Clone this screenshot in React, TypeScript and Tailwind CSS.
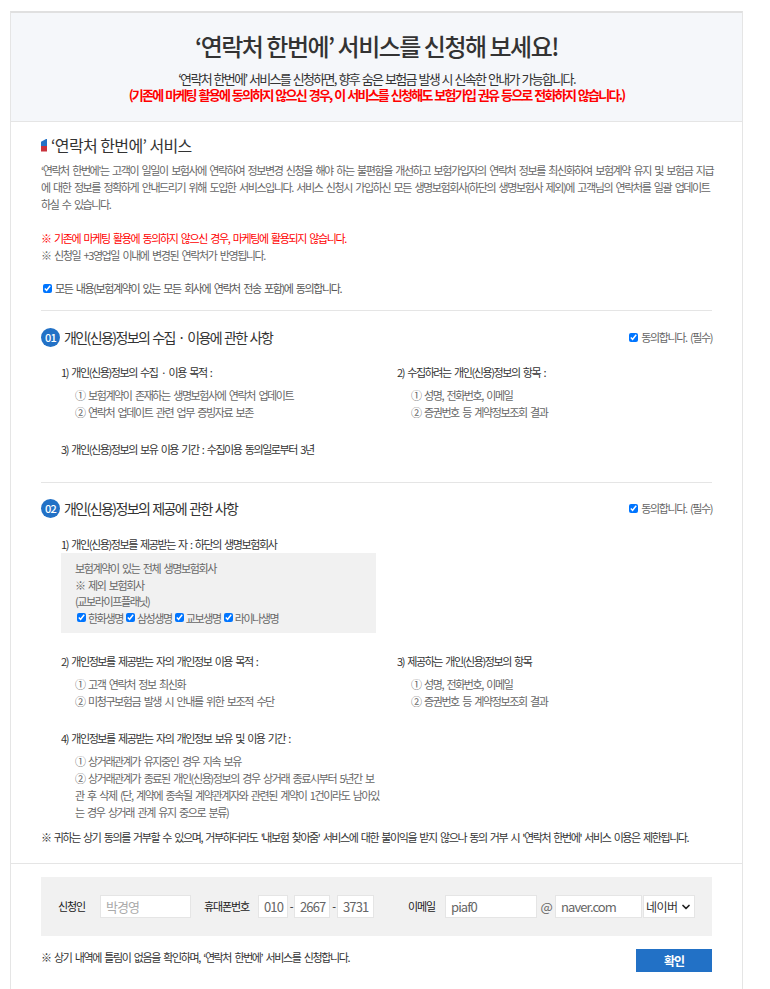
import React from 'react';
import { ChevronDown } from 'lucide-react';

const bodyText = 'text-[11px] tracking-[-1.4px] [word-spacing:2.3px]';

const Check = () => (
  <input type="checkbox" defaultChecked className="w-[9px] h-[9px] m-0 shrink-0 accent-[#0075ff]" />
);

const Head = ({ children, className = '' }: { children: React.ReactNode; className?: string }) => (
  <p className={`h-[17px] whitespace-nowrap leading-[17px] text-[11px] tracking-[-1.4px] [word-spacing:2.1px] text-[#333] ${className}`}>{children}</p>
);

const Item = ({ children }: { children: React.ReactNode }) => (
  <p className="pl-[14px] whitespace-nowrap leading-[17px] text-[11px] tracking-[-1.4px] [word-spacing:2.3px] text-[#666]">{children}</p>
);

const SectionTitle = ({ num, title }: { num: string; title: string }) => (
  <div className="flex items-center justify-between h-[20px]">
    <div className="flex items-center">
      <span className="w-[19px] h-[19px] rounded-full bg-[#2271c6] text-white text-[11px] font-medium tracking-[-0.8px] flex items-center justify-center">{num}</span>
      <h3 className="ml-[4px] text-[14px] tracking-[-1.6px] [word-spacing:1.5px] text-[#333]">{title}</h3>
    </div>
    <label className={`flex items-center gap-[3px] ${bodyText} text-[#666]`}>
      <Check />
      동의합니다. (필수)
    </label>
  </div>
);

const Company = ({ name }: { name: string }) => (
  <span className="flex items-center gap-[2px]">
    <Check />
    {name}
  </span>
);

const inputCls = 'h-[23px] border border-[#e5e5e5] bg-white pl-[5px] pr-0 text-[13px] tracking-[-0.9px] text-[#666] outline-none';

export default function App() {
  return (
    <div className="min-h-screen bg-white pl-[10px] pt-[11px] font-['Noto_Sans_CJK_KR','Noto_Sans',sans-serif]">
      <div className="w-[733px] border-x border-[#e5e5e5] border-t-2 border-t-[#e0e0e0]">
        {/* Top banner */}
        <header className="h-[109px] bg-[#f5f7fa] border-b border-[#e5e5e5] pt-[16px] text-center">
          <h1 className="text-[24px] leading-[34px] font-medium tracking-[-1.5px] text-[#333]">‘연락처 한번에’ 서비스를 신청해 보세요!</h1>
          <p className="mt-[8px] text-[13px] leading-[16px] tracking-[-1.7px] [word-spacing:1.5px] text-[#333]">‘연락처 한번에’ 서비스를 신청하면, 향후 숨은 보험금 발생 시 신속한 안내가 가능합니다.</p>
          <p className="text-[13px] leading-[16px] font-bold tracking-[-1.75px] [word-spacing:1.5px] text-[#ff0000]">(기존에 마케팅 활용에 동의하지 않으신 경우, 이 서비스를 신청해도 보험가입 권유 등으로 전화하지 않습니다.)</p>
        </header>

        <div className="px-[30px]">
          {/* Intro */}
          <div className="pt-[13px] pb-[13px] border-b border-[#e5e5e5]">
            <h2 className="flex items-center h-[20px] text-[16px] tracking-[-0.6px] text-[#333]">
              <span className="w-[6px] h-[13px] mr-[4px] bg-[linear-gradient(180deg,#2271c6_55%,#c8323c_55%)] [clip-path:polygon(0_25%,100%_0,100%_100%,0_100%)]" />
              ‘연락처 한번에’ 서비스
            </h2>
            <p className={`mt-[7px] whitespace-nowrap ${bodyText} leading-[17px] text-[#666]`}>
              ‘연락처 한번에’는 고객이 일일이 보험사에 연락하여 정보변경 신청을 해야 하는 불편함을 개선하고 보험가입자의 연락처 정보를 최신화하여 보험계약 유지 및 보험금 지급<br />
              에 대한 정보를 정확하게 안내드리기 위해 도입한 서비스입니다. 서비스 신청시 가입하신 모든 생명보험회사(하단의 생명보험사 제외)에 고객님의 연락처를 일괄 업데이트<br />
              하실 수 있습니다.
            </p>
            <p className={`mt-[17px] ${bodyText} leading-[17px] text-[#ff0000]`}>※ 기존에 마케팅 활용에 동의하지 않으신 경우, 마케팅에 활용되지 않습니다.</p>
            <p className={`${bodyText} leading-[17px] text-[#666]`}>※ 신청일 +3영업일 이내에 변경된 연락처가 반영됩니다.</p>
            <label className={`mt-[16px] pl-[2px] flex items-center gap-[3px] h-[17px] ${bodyText} text-[#555]`}>
              <Check />
              모든 내용(보험계약이 있는 모든 회사에 연락처 전송 포함)에 동의합니다.
            </label>
          </div>

          {/* Section 01 */}
          <section className="pt-[16px] pb-[24px] border-b border-[#e5e5e5]">
            <SectionTitle num="01" title="개인(신용)정보의 수집 · 이용에 관한 사항" />
            <div className="mt-[17px] pl-[20px] grid grid-cols-[336px_1fr]">
              <div>
                <Head className="mb-[6px]">1) 개인(신용)정보의 수집 · 이용 목적 :</Head>
                <Item>① 보험계약이 존재하는 생명보험사에 연락처 업데이트</Item>
                <Item>② 연락처 업데이트 관련 업무 증빙자료 보존</Item>
              </div>
              <div>
                <Head className="mb-[6px]">2) 수집하려는 개인(신용)정보의 항목 :</Head>
                <Item>① 성명, 전화번호, 이메일</Item>
                <Item>② 증권번호 등 계약정보조회 결과</Item>
              </div>
            </div>
            <Head className="mt-[20px] ml-[20px]">3) 개인(신용)정보의 보유 이용 기간 : 수집이용 동의일로부터 3년</Head>
          </section>

          {/* Section 02 */}
          <section className="pt-[15px] pb-[17px]">
            <SectionTitle num="02" title="개인(신용)정보의 제공에 관한 사항" />
            <div className="pl-[20px]">
              <Head className="mt-[18px]">1) 개인(신용)정보를 제공받는 자 : 하단의 생명보험회사</Head>
              <div className={`w-[315px] h-[80px] bg-[#f1f1f1] pt-[7px] pl-[14px] ${bodyText} leading-[16.5px] text-[#666]`}>
                <p>보험계약이 있는 전체 생명보험회사</p>
                <p>※ 제외 보험회사</p>
                <p>(교보라이프플래닛)</p>
                <div className="flex items-center gap-[3px] pl-[2px]">
                  <Company name="한화생명" />
                  <Company name="삼성생명" />
                  <Company name="교보생명" />
                  <Company name="라이나생명" />
                </div>
              </div>
              <div className="mt-[20px] grid grid-cols-[336px_1fr]">
                <div>
                  <Head className="mb-[6px]">2) 개인정보를 제공받는 자의 개인정보 이용 목적 :</Head>
                  <Item>① 고객 연락처 정보 최신화</Item>
                  <Item>② 미청구보험금 발생 시 안내를 위한 보조적 수단</Item>
                </div>
                <div>
                  <Head className="mb-[6px]">3) 제공하는 개인(신용)정보의 항목</Head>
                  <Item>① 성명, 전화번호, 이메일</Item>
                  <Item>② 증권번호 등 계약정보조회 결과</Item>
                </div>
              </div>
              <Head className="mt-[20px] mb-[6px]">4) 개인정보를 제공받는 자의 개인정보 보유 및 이용 기간 :</Head>
              <Item>① 상거래관계가 유지중인 경우 지속 보유</Item>
              <Item>
                ② 상거래관계가 종료된 개인(신용)정보의 경우 상거래 종료시부터 5년간 보<br />
                관 후 삭제 (단, 계약에 종속될 계약관계자와 관련된 계약이 1건이라도 남아있<br />
                는 경우 상거래 관계 유지 중으로 분류)
              </Item>
            </div>
            <Head className="mt-[8px]">※ 귀하는 상기 동의를 거부할 수 있으며, 거부하더라도 '내보험 찾아줌' 서비스에 대한 불이익을 받지 않으나 동의 거부 시 '연락처 한번에' 서비스 이용은 제한됩니다.</Head>
          </section>
        </div>

        {/* Apply form */}
        <div className="border-t border-[#e5e5e5] px-[30px] pt-[13px] pb-[17px]">
          <div className="h-[59px] bg-[#f1f1f1] flex items-center pl-[17px] text-[11px] tracking-[-1.1px] text-[#222]">
            <span className="w-[42px]">신청인</span>
            <input readOnly value="박경영" className={`${inputCls} w-[91px] bg-[#f3f3f3] border-[#e0e0e0] text-[#aaa] text-[12px] tracking-[-0.6px]`} />
            <span className="ml-[13px] w-[54px]">휴대폰번호</span>
            <input readOnly value="010" className={`${inputCls} w-[30px]`} />
            <span className="w-[6px] text-center">-</span>
            <input readOnly value="2667" className={`${inputCls} w-[36px]`} />
            <span className="w-[7px] text-center">-</span>
            <input readOnly value="3731" className={`${inputCls} w-[37px]`} />
            <span className="ml-[34px] w-[37px]">이메일</span>
            <input readOnly value="piaf0" className={`${inputCls} w-[92px] bg-[#e8f0fe] text-[#222] tracking-[-0.3px]`} />
            <span className="w-[18px] text-center text-[13px] text-[#666]">@</span>
            <input readOnly value="naver.com" className={`${inputCls} w-[87px] tracking-[-0.7px]`} />
            <div className="relative ml-[1px]">
              <select className="block h-[23px] w-[52px] appearance-none bg-white border border-[#e5e5e5] pl-[2px] text-[12px] tracking-[-0.6px] text-[#333] outline-none">
                <option>네이버</option>
              </select>
              <ChevronDown size={12} strokeWidth={3.5} className="absolute right-[3px] top-[6px] pointer-events-none text-[#222]" />
            </div>
          </div>
          <div className="mt-[13px] flex items-center justify-between">
            <p className={`${bodyText} text-[#333] -mt-[6px]`}>※ 상기 내역에 틀림이 없음을 확인하며, ‘연락처 한번에’ 서비스를 신청합니다.</p>
            <button className="w-[76px] h-[23px] bg-[#2271c6] text-white text-[12px] font-bold tracking-[-1px]">확인</button>
          </div>
        </div>
      </div>
    </div>
  );
}
